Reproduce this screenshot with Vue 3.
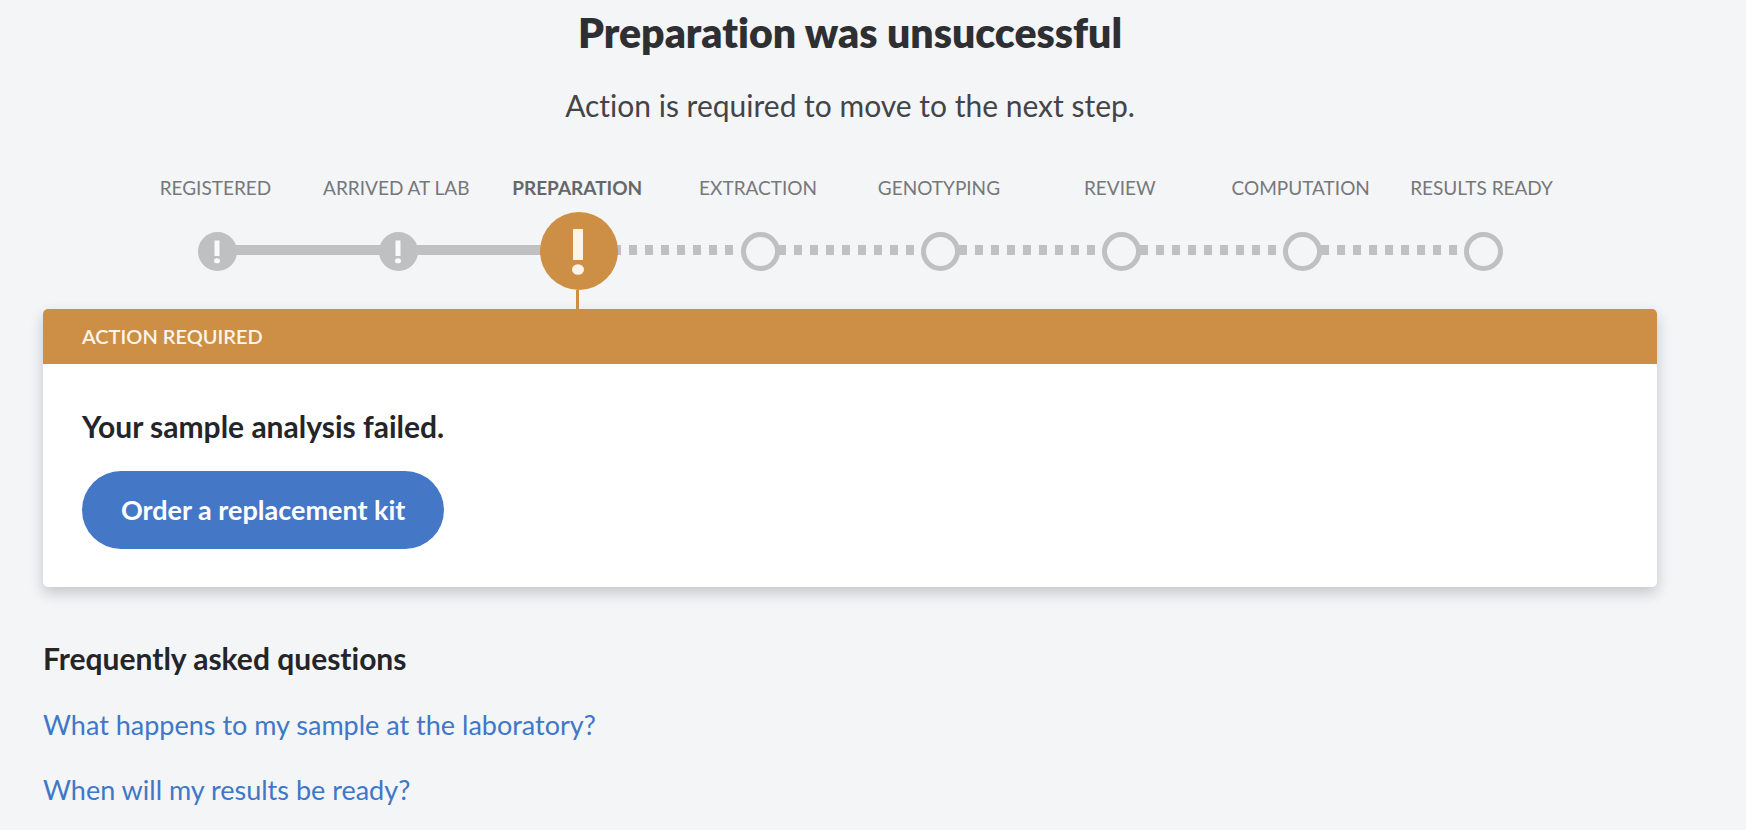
<template>
  <main class="status-page">
    <header class="status-header">
      <h1>Preparation was unsuccessful</h1>
      <p>Action is required to move to the next step.</p>
    </header>

    <ol class="steps">
      <li v-for="step in steps" :key="step.label" class="step" :class="step.state">
        <span class="step-label">{{ step.label }}</span>
        <div class="step-track">
          <div class="marker">
            <svg v-if="step.state !== 'pending'" viewBox="0 0 78 78" aria-hidden="true">
              <rect x="33" y="17" width="10" height="31" />
              <ellipse cx="38" cy="57.5" rx="6" ry="5.2" />
            </svg>
          </div>
        </div>
      </li>
    </ol>

    <section class="card">
      <div class="card-banner">Action required</div>
      <div class="card-body">
        <h2>Your sample analysis failed.</h2>
        <button type="button" class="order-button">Order a replacement kit</button>
      </div>
    </section>

    <section class="faq">
      <h2>Frequently asked questions</h2>
      <a v-for="question in questions" :key="question" href="#">{{ question }}</a>
    </section>
  </main>
</template>

<script setup>
const steps = [
  { label: 'Registered', state: 'done' },
  { label: 'Arrived at lab', state: 'done' },
  { label: 'Preparation', state: 'current' },
  { label: 'Extraction', state: 'pending' },
  { label: 'Genotyping', state: 'pending' },
  { label: 'Review', state: 'pending' },
  { label: 'Computation', state: 'pending' },
  { label: 'Results ready', state: 'pending' },
];

const questions = [
  'What happens to my sample at the laboratory?',
  'When will my results be ready?',
];
</script>

<style>
body {
  background: #f3f5f7;
}
</style>

<style scoped>
.status-page {
  padding: 8px 89px 16px 43px;
  font-family: Lato, 'Open Sans', sans-serif;
  font-variant-ligatures: none;
  color: #242528;
}

h1,
h2,
p {
  margin: 0;
}

.status-header {
  text-align: center;
}

.status-header h1 {
  font-size: 41px;
  line-height: 50px;
  font-weight: 800;
  color: #2e2f32;
}

.status-header p {
  margin-top: 28px;
  font-size: 30px;
  line-height: 38px;
  font-weight: 400;
  color: #434447;
}

.steps {
  display: grid;
  grid-template-columns: repeat(8, 1fr);
  margin: 50px 0 0;
  padding: 0 85px 0 82px;
  list-style: none;
}

.step {
  text-align: center;
}

.step-label {
  display: block;
  font-size: 19px;
  line-height: 28px;
  color: #77787a;
  text-transform: uppercase;
  white-space: nowrap;
}

.step.current .step-label {
  font-weight: 700;
  color: #666769;
}

.step-track {
  position: relative;
  display: flex;
  align-items: center;
  justify-content: center;
  height: 78px;
  margin: 10px -2px 0 2px;
}

.marker {
  position: relative;
  z-index: 1;
  box-sizing: border-box;
  width: 39px;
  height: 39px;
  border: 5px solid #bfc0c2;
  border-radius: 50%;
}

.done .marker {
  border: 0;
  background: #bfc0c2;
}

.current .marker {
  width: 78px;
  height: 78px;
  border: 0;
  background: #cd8f45;
}

.marker svg {
  display: block;
  width: 100%;
  height: 100%;
  fill: #fcf3ea;
}

.done .marker svg {
  fill: #fafafa;
}

/* connector running to the next marker */
.step:not(:last-child) .step-track::before {
  content: '';
  position: absolute;
  top: 33px;
  left: calc(50% + 18px);
  width: calc(100% - 38px);
  height: 10px;
  background: repeating-linear-gradient(90deg, #bfc0c2 0 8px, transparent 8px 16px);
}

.step.done .step-track::before {
  width: calc(100% - 36px);
  background: #bfc0c2;
}

/* stem that ties the current step to the card */
.current::after {
  content: '';
  display: block;
  width: 3px;
  height: 19px;
  margin: 0 auto;
  background: #cd8f45;
}

.card {
  overflow: hidden;
  border-radius: 5px;
  background: #fff;
  box-shadow: 0 6px 14px rgba(30, 32, 36, 0.22);
}

.card-banner {
  padding: 13px 39px 14px;
  font-size: 20px;
  line-height: 28px;
  font-weight: 600;
  color: #fdf5ec;
  text-transform: uppercase;
  background: #cd8f45;
}

.card-body {
  padding: 43px 39px 38px;
}

.card-body h2,
.faq h2 {
  font-size: 30px;
  line-height: 38px;
  font-weight: 700;
}

.order-button {
  display: block;
  margin-top: 26px;
  padding: 20px 39px;
  border: 0;
  border-radius: 39px;
  font-family: inherit;
  font-size: 27px;
  line-height: 38px;
  font-weight: 700;
  color: #fff;
  background: #4577c7;
  cursor: pointer;
}

.faq {
  display: flex;
  flex-direction: column;
  align-items: flex-start;
  margin-top: 52px;
}

.faq h2 {
  margin-bottom: 2px;
}

.faq a {
  margin-top: 27px;
  font-size: 27px;
  line-height: 38px;
  color: #4077c8;
  text-decoration: none;
}
</style>
